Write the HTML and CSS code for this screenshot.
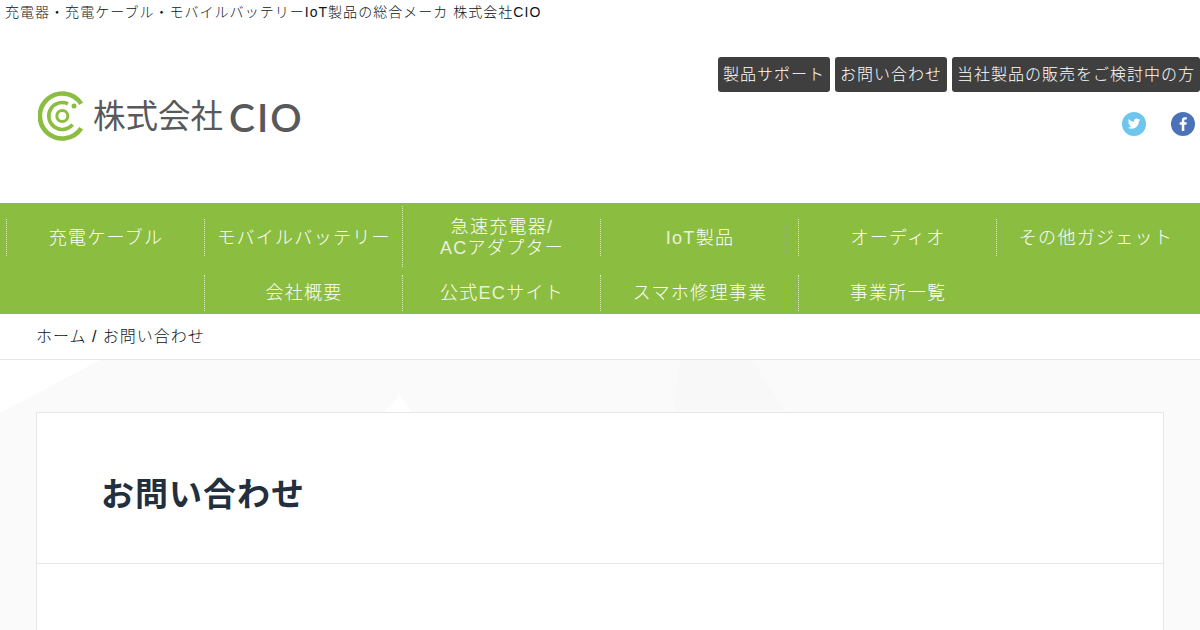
FILE: index.html
```html
<!DOCTYPE html>
<html lang="ja">
<head>
<meta charset="utf-8">
<title>お問い合わせ</title>
<link rel="stylesheet" href="styles.css">
</head>
<body>
<header class="header">
  <h1 class="tagline">充電器・充電ケーブル・モバイルバッテリーIoT製品の総合メーカ 株式会社CIO</h1>
  <div class="masthead">
    <a class="logo">
      <svg class="logo-mark" viewBox="0 0 50 52" width="50" height="52" aria-hidden="true">
        <g fill="none" stroke="#8bbd41">
          <path d="M43.2 12.7 A22.5 22.5 0 1 0 43.2 37.3" stroke-width="4.6"/>
          <path d="M30 12.800 A13.500 13.500 0 1 0 34.6 33.700" stroke-width="3.6"/>
          <circle cx="24.300" cy="25" r="5.500" stroke-width="3"/>
        </g>
        <circle cx="36" cy="15" r="2.500" fill="#8bbd41"/>
      </svg>
      <span class="logo-jp">株式会社</span><span class="logo-en">CIO</span>
    </a>
    <div class="masthead-right">
      <ul class="buttons">
        <li class="button">製品サポート</li>
        <li class="button">お問い合わせ</li>
        <li class="button">当社製品の販売をご検討中の方</li>
      </ul>
      <ul class="social">
        <li>
          <svg viewBox="0 0 24 24" width="24" height="24" aria-hidden="true">
            <circle cx="12" cy="12" r="12" fill="#6ec6ee"/>
            <path fill="#fff" d="M18.500 7.700c-.5.2-1 .4-1.500.4.500-.3 1-.8 1.200-1.400-.5.300-1.100.5-1.700.6-.5-.5-1.200-.8-1.900-.8-1.700 0-2.900 1.600-2.500 3.200-2.200-.1-4.100-1.100-5.400-2.700-.7 1.200-.4 2.700.8 3.500-.4 0-.8-.1-1.200-.3 0 1.200.9 2.400 2.100 2.600-.4.100-.8.100-1.200 0 .3 1 1.300 1.800 2.400 1.800-1.100.9-2.500 1.200-3.900 1.100 1.100.7 2.500 1.100 3.900 1.100 4.800 0 7.500-4 7.300-7.700.6-.3 1.100-.8 1.600-1.400z"/>
          </svg>
        </li>
        <li>
          <svg viewBox="0 0 24 24" width="24" height="24" aria-hidden="true">
            <circle cx="12" cy="12" r="12" fill="#4b72b8"/>
            <path fill="#fff" d="M13.300 19v-6.300h2.100l.3-2.500h-2.400V8.700c0-.7.200-1.200 1.200-1.200h1.300V5.300c-.2 0-1-.1-1.900-.1-1.900 0-3.100 1.100-3.100 3.200v1.800H8.700v2.500h2.100V19z"/>
          </svg>
        </li>
      </ul>
    </div>
  </div>
</header>
<nav class="nav">
  <ul class="nav-list">
    <li class="nav-item">充電ケーブル</li>
    <li class="nav-item">モバイルバッテリー</li>
    <li class="nav-item"><span>急速充電器<span class="latin">/</span><br><span class="latin">AC</span>アダプター</span></li>
    <li class="nav-item"><span><span class="latin">IoT</span>製品</span></li>
    <li class="nav-item">オーディオ</li>
    <li class="nav-item">その他ガジェット</li>
    <li class="nav-item">会社概要</li>
    <li class="nav-item"><span>公式<span class="latin">EC</span>サイト</span></li>
    <li class="nav-item">スマホ修理事業</li>
    <li class="nav-item">事業所一覧</li>
  </ul>
</nav>
<div class="breadcrumb">ホーム / お問い合わせ</div>
<main class="main">
  <svg class="backdrop" viewBox="0 0 1200 270" width="1200" height="270" aria-hidden="true">
    <path fill="#fafafa" d="M0 270 V53 L2 52 L100 0 H1200 V270 H1164 V52 H412 L400 35 L384 52 H36 V270 Z"/>
    <path fill="#f8f8f8" d="M680 0 H752 L786 52 H674 Z"/>
  </svg>
  <article class="card">
    <div class="card-head"><h2 class="card-title">お問い合わせ</h2></div>
  </article>
</main>
</body>
</html>
```
FILE: styles.css
```css
* { box-sizing: border-box; }
html, body { margin: 0; padding: 0; }
body {
  width: 1200px;
  height: 630px;
  overflow: hidden;
  background: #fff;
  color: #222;
  font-family: "Liberation Sans", "Noto Sans CJK JP", sans-serif;
  font-weight: 300;
  letter-spacing: 1px;
}
ul { list-style: none; margin: 0; padding: 0; }
.latin { opacity: .8; }
.header { height: 203px; }
.tagline {
  margin: 0;
  padding: 3px 0 0 5px;
  height: 57px;
  font-size: 14px;
  line-height: 18px;
  font-weight: 300;
  letter-spacing: 1.03px;
  color: #0c1420;
}
.masthead { display: flex; justify-content: space-between; }
.logo {
  display: flex;
  align-items: center;
  height: 52px;
  margin: 34px 0 0 38px;
  color: #58595b;
}
.logo-mark { display: block; flex: none; margin-right: 5px; }
.logo-jp { font-size: 32.500px; letter-spacing: 0; line-height: 52px; font-weight: 400; }
.logo-en {
  font-family: "Lato", "Liberation Sans", sans-serif;
  font-size: 39px;
  line-height: 52px;
  font-weight: 600;
  letter-spacing: 2px;
  margin-left: 6px;
}
.buttons { display: flex; justify-content: flex-end; gap: 5px; }
.button {
  height: 35px;
  padding: 0 5px;
  background: #3f3f3f;
  color: #fff;
  border-radius: 3px;
  font-size: 16px;
  line-height: 35px;
  white-space: nowrap;
}
.social { display: flex; justify-content: flex-end; gap: 25px; margin: 20px 5px 0 0; }
.social svg { display: block; }
.nav { height: 111px; background: #8bbd41; color: #fff; }
.nav-list { display: flex; flex-wrap: wrap; justify-content: center; padding: 3px 6px 0; }
.nav-item {
  position: relative;
  width: 198px;
  display: flex;
  align-items: center;
  justify-content: center;
  text-align: center;
  font-size: 18px;
  line-height: 21px;
  letter-spacing: 1.300px;
  height: 61px;
  padding: 4px 0 0 2px;
}
.nav-item:nth-child(3) { padding-top: 2px; }
.nav-item:nth-child(n+7) { height: 44px; padding-top: 9px; }
.nav-item::before {
  content: "";
  position: absolute;
  left: 0;
  top: 13px;
  bottom: 11px;
  border-left: 1px dotted #dcebc4;
}
.nav-item:nth-child(3)::before { top: 0; bottom: 0; }
.nav-item:nth-child(n+7)::before { top: 8px; bottom: 0; }
.breadcrumb {
  height: 46px;
  padding: 1px 0 0 36px;
  border-bottom: 1px solid #e6e6e6;
  font-size: 16px;
  line-height: 44px;
  color: #0c1420;
}
.main { position: relative; height: 270px; padding: 52px 36px 0; overflow: hidden; }
.backdrop { position: absolute; left: 0; top: 0; }
.card {
  position: relative;
  height: 300px;
  background: #fff;
  border: 1px solid #e6e6e6;
}
.card-head { height: 151px; border-bottom: 1px solid #e6e6e6; padding: 59px 0 0 64px; }
.card-title { margin: 0; font-size: 33px; line-height: 45px; font-weight: 700; color: #232f3e; letter-spacing: 1px; }
```
